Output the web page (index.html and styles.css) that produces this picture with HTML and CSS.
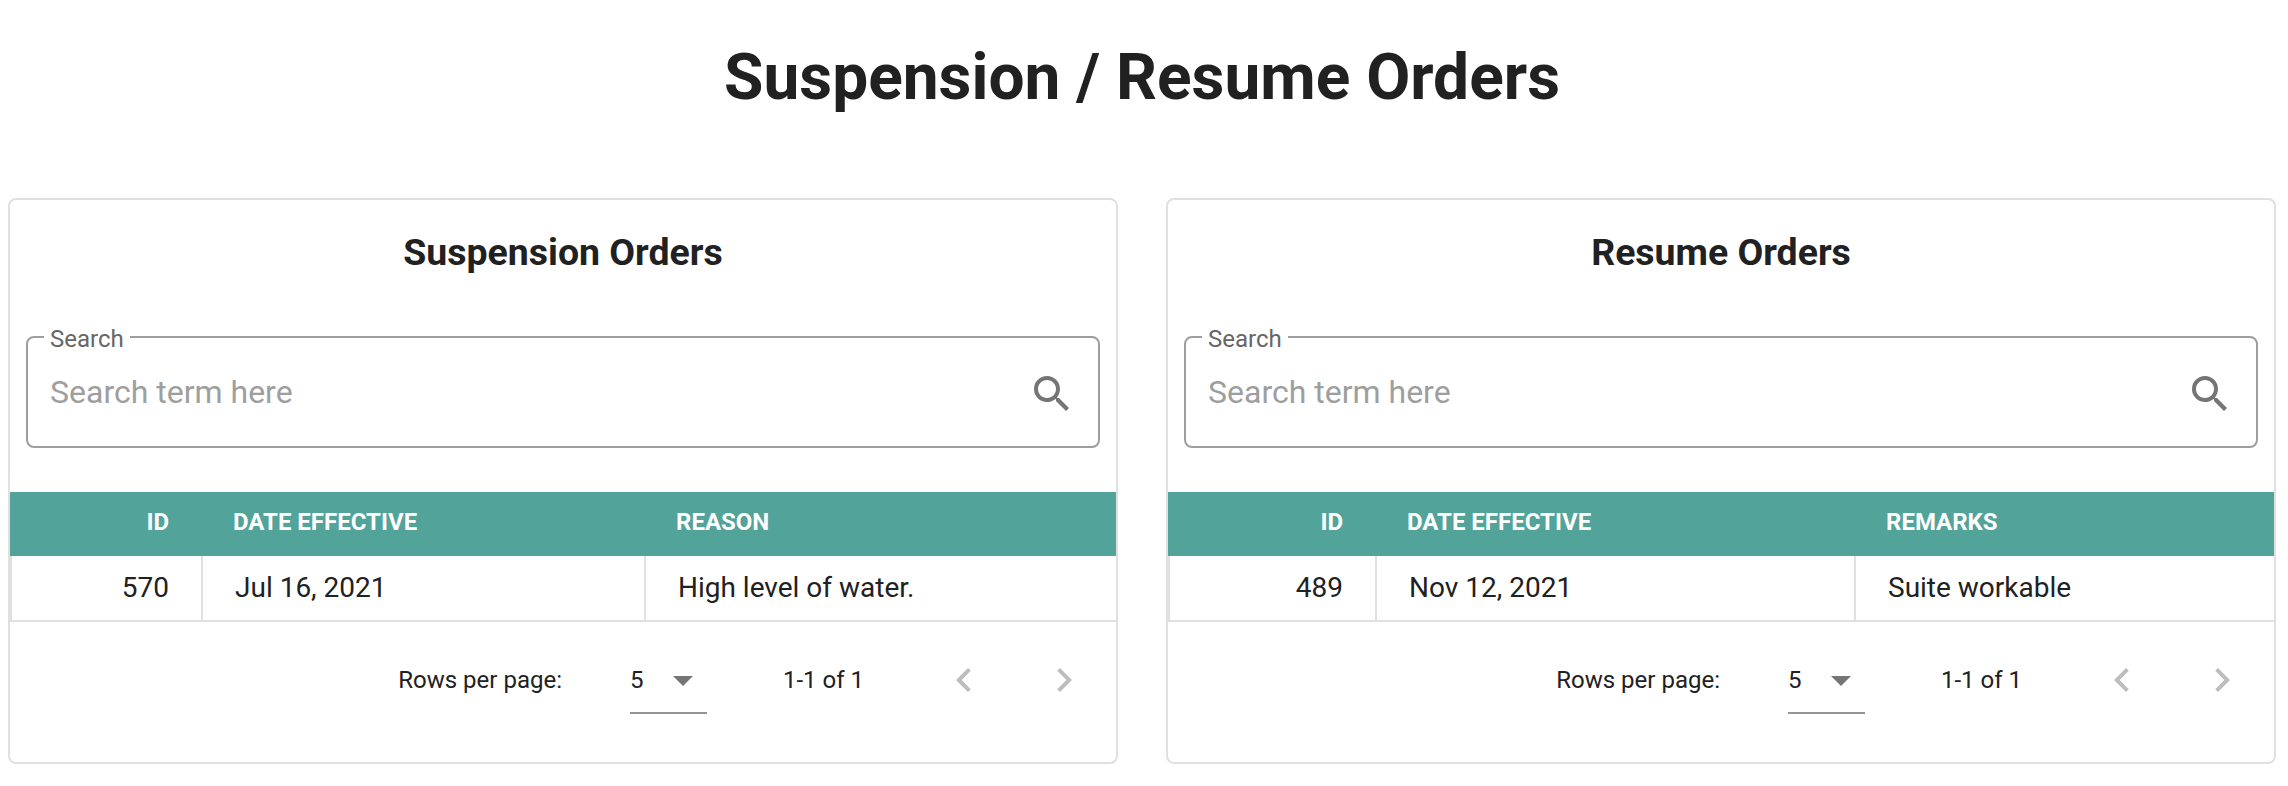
FILE: index.html
```html
<!DOCTYPE html>
<html lang="en">
<head>
<meta charset="utf-8">
<title>Suspension / Resume Orders</title>
<link rel="stylesheet" href="styles.css">
</head>
<body>
<h1 class="page-title">Suspension / Resume Orders</h1>
<main class="cards">
  <section class="card">
    <h3 class="card-title">Suspension Orders</h3>
    <fieldset class="field">
      <legend class="field-legend">Search</legend>
      <div class="field-row">
        <span class="placeholder">Search term here</span>
        <svg class="icon" viewBox="0 0 24 24"><path d="M9.5,3A6.5,6.5 0 0,1 16,9.5C16,11.11 15.41,12.59 14.44,13.73L14.71,14H15.5L20.5,19L19,20.5L14,15.5V14.71L13.73,14.44C12.59,15.41 11.11,16 9.5,16A6.5,6.5 0 0,1 3,9.5A6.5,6.5 0 0,1 9.5,3M9.5,5C7,5 5,7 5,9.5C5,12 7,14 9.5,14C12,14 14,12 14,9.5C14,7 12,5 9.5,5Z"/></svg>
      </div>
    </fieldset>
    <div class="table suspension">
      <div class="th num">ID</div><div class="th">DATE EFFECTIVE</div><div class="th">REASON</div>
      <div class="td num">570</div><div class="td">Jul 16, 2021</div><div class="td">High level of water.</div>
    </div>
    <footer class="footer">
      <span class="rows-label">Rows per page:</span>
      <div class="select"><span class="select-value">5</span><svg class="icon" viewBox="0 0 24 24"><path d="M7,10L12,15L17,10H7Z"/></svg></div>
      <span class="range">1-1 of 1</span>
      <svg class="icon nav prev" viewBox="0 0 24 24"><path d="M15.41,16.58L10.83,12L15.41,7.41L14,6L8,12L14,18L15.41,16.58Z"/></svg>
      <svg class="icon nav next" viewBox="0 0 24 24"><path d="M8.59,16.58L13.17,12L8.59,7.41L10,6L16,12L10,18L8.59,16.58Z"/></svg>
    </footer>
  </section>
  <section class="card">
    <h3 class="card-title">Resume Orders</h3>
    <fieldset class="field">
      <legend class="field-legend">Search</legend>
      <div class="field-row">
        <span class="placeholder">Search term here</span>
        <svg class="icon" viewBox="0 0 24 24"><path d="M9.5,3A6.5,6.5 0 0,1 16,9.5C16,11.11 15.41,12.59 14.44,13.73L14.71,14H15.5L20.5,19L19,20.5L14,15.5V14.71L13.73,14.44C12.59,15.41 11.11,16 9.5,16A6.5,6.5 0 0,1 3,9.5A6.5,6.5 0 0,1 9.5,3M9.5,5C7,5 5,7 5,9.5C5,12 7,14 9.5,14C12,14 14,12 14,9.5C14,7 12,5 9.5,5Z"/></svg>
      </div>
    </fieldset>
    <div class="table resume">
      <div class="th num">ID</div><div class="th">DATE EFFECTIVE</div><div class="th">REMARKS</div>
      <div class="td num">489</div><div class="td">Nov 12, 2021</div><div class="td">Suite workable</div>
    </div>
    <footer class="footer">
      <span class="rows-label">Rows per page:</span>
      <div class="select"><span class="select-value">5</span><svg class="icon" viewBox="0 0 24 24"><path d="M7,10L12,15L17,10H7Z"/></svg></div>
      <span class="range">1-1 of 1</span>
      <svg class="icon nav prev" viewBox="0 0 24 24"><path d="M15.41,16.58L10.83,12L15.41,7.41L14,6L8,12L14,18L15.41,16.58Z"/></svg>
      <svg class="icon nav next" viewBox="0 0 24 24"><path d="M8.59,16.58L13.17,12L8.59,7.41L10,6L16,12L10,18L8.59,16.58Z"/></svg>
    </footer>
  </section>
</main>
</body>
</html>
```
FILE: styles.css
```css
* { box-sizing: border-box; }
body {
  margin: 0;
  background: #fff;
  color: #212121;
  font-family: Roboto, "Liberation Sans", sans-serif;
}
.page-title {
  margin: 0;
  padding: 30px 4px 0 0;
  height: 198px;
  font-size: 64px;
  line-height: 96px;
  font-weight: 700;
  text-align: center;
}
.cards {
  display: grid;
  grid-template-columns: 1110px 1110px;
  gap: 48px;
  padding-left: 8px;
}
.card {
  height: 566px;
  border: 2px solid #e0e0e0;
  border-radius: 8px;
}
.card-title {
  margin: 0;
  padding-top: 20px;
  height: 124px;
  font-size: 37.44px;
  line-height: 64px;
  font-weight: 700;
  text-align: center;
}
.field {
  height: 124px;
  margin: 0 16px 44px;
  padding: 0;
  border: 2px solid #9e9e9e;
  border-radius: 8px;
}
.field-legend {
  height: 26px;
  margin-left: 16px;
  padding: 0 6px;
  font-size: 24px;
  line-height: 30px;
  color: #666;
}
.field-row {
  display: flex;
  align-items: center;
  justify-content: space-between;
  padding: 20px 22px 0;
}
.placeholder {
  padding-bottom: 4px;
  font-size: 32px;
  line-height: 40px;
  color: #9e9e9e;
}
.icon {
  display: block;
  flex: none;
  width: 48px;
  height: 48px;
  fill: #757575;
}
.table {
  display: grid;
  grid-template-rows: 64px 66px;
}
.suspension { grid-template-columns: 191px 443px 1fr; }
.resume { grid-template-columns: 207px 479px 1fr; }
.th {
  padding: 0 32px;
  background: #52a399;
  color: #fff;
  font-size: 24px;
  line-height: 60px;
  font-weight: 700;
}
.td {
  padding: 0 32px;
  border-left: 2px solid #e0e0e0;
  border-bottom: 2px solid #e0e0e0;
  font-size: 28px;
  line-height: 64px;
}
.num { text-align: right; }
.footer {
  display: flex;
  align-items: flex-start;
  justify-content: flex-end;
  padding: 34px 28px 0 0;
  font-size: 24px;
  line-height: 48px;
}
.select {
  display: flex;
  justify-content: space-between;
  width: 77px;
  height: 58px;
  margin: 0 76px 0 68px;
  border-bottom: 2px solid #949494;
}
.nav { fill: #bdbdbd; }
.prev { margin-left: 76px; }
.next { margin-left: 52px; }
```
